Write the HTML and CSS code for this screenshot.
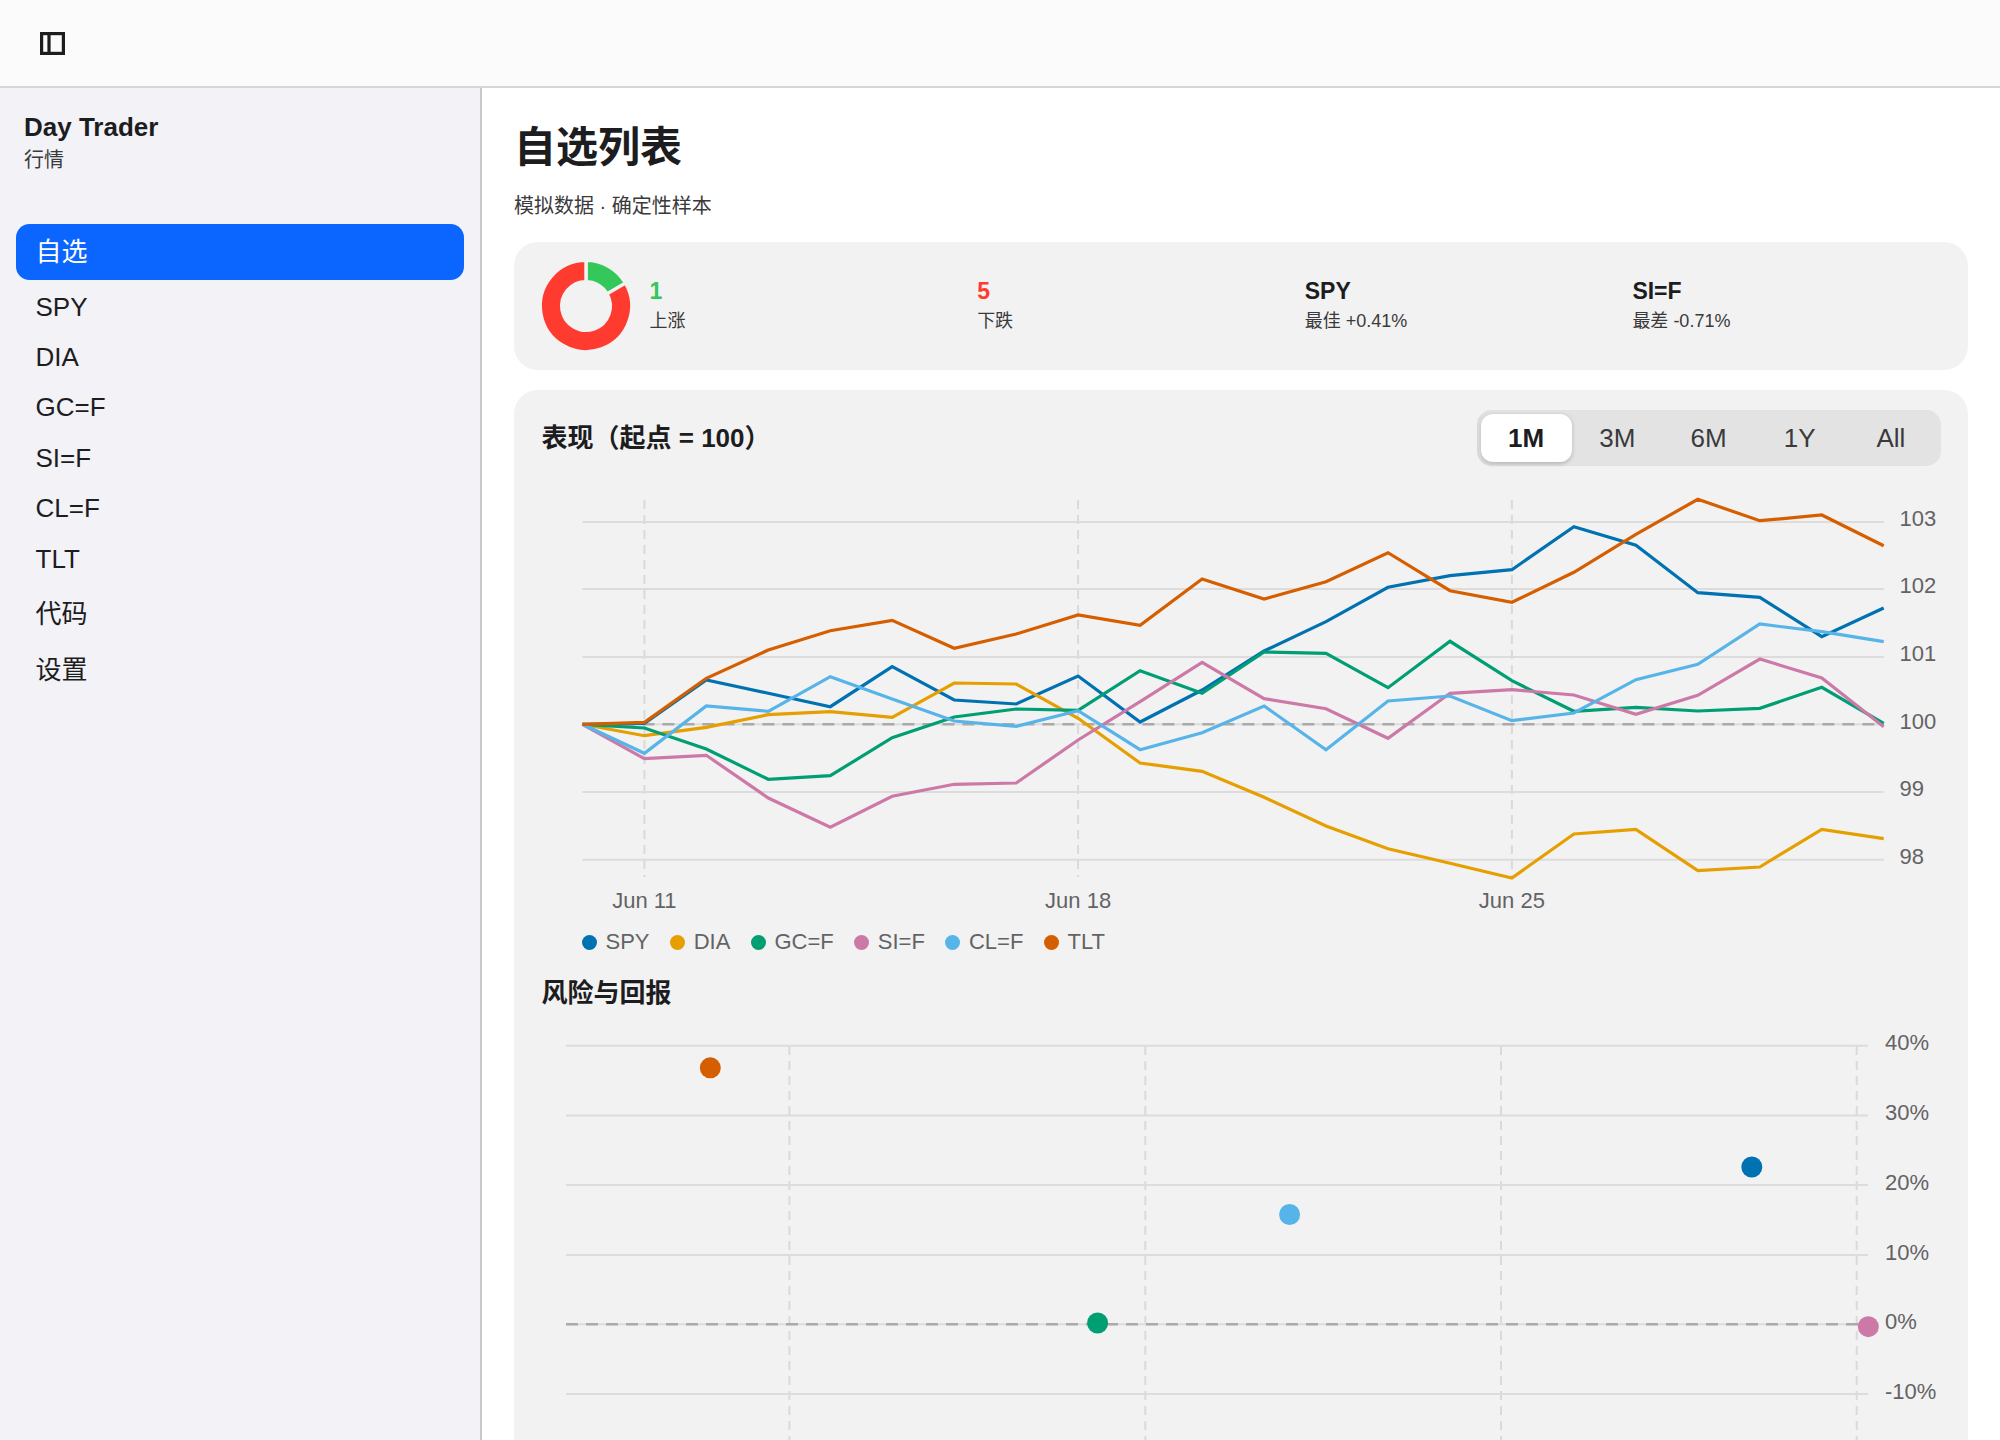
FILE: index.html
```html
<!DOCTYPE html>
<html lang="zh">
<head>
<meta charset="utf-8">
<title>自选列表</title>
<link rel="stylesheet" href="styles.css">
</head>
<body>
<header class="topbar">
  <button class="icon-btn" aria-label="Toggle sidebar">
    <svg width="25" height="23" viewBox="0 0 25 23"><rect x="1.6" y="1.6" width="21.8" height="19.8" class="ico"/><line x1="9" y1="1.6" x2="9" y2="21.4" class="ico"/></svg>
  </button>
</header>
<div class="shell">
  <aside class="sidebar">
    <div class="brand">
      <div class="brand-name">Day Trader</div>
      <div class="brand-sub">行情</div>
    </div>
    <nav class="nav">
      <a class="nav-item active">自选</a>
      <a class="nav-item">SPY</a>
      <a class="nav-item">DIA</a>
      <a class="nav-item">GC=F</a>
      <a class="nav-item">SI=F</a>
      <a class="nav-item">CL=F</a>
      <a class="nav-item">TLT</a>
      <a class="nav-item cjk">代码</a>
      <a class="nav-item cjk">设置</a>
    </nav>
  </aside>
  <main class="main">
    <h1 class="title">自选列表</h1>
    <p class="subtitle">模拟数据 · 确定性样本</p>
    <section class="card summary">
      <svg class="donut" width="88" height="88" viewBox="0 0 88 88">
        <path class="seg-up" d="M44 -1.7A45.7 45.7 0 0 1 83.58 21.15L65.04 31.85A24.3 24.3 0 0 0 44 19.7Z"/>
        <path class="seg-down" d="M83.58 21.15A45.7 45.7 0 1 1 44 -1.7L44 19.7A24.3 24.3 0 1 0 65.04 31.85Z"/>
      </svg>
      <div class="stats">
        <div class="stat"><div class="stat-value up">1</div><div class="stat-label">上涨</div></div>
        <div class="stat"><div class="stat-value down">5</div><div class="stat-label">下跌</div></div>
        <div class="stat"><div class="stat-value">SPY</div><div class="stat-label">最佳 +0.41%</div></div>
        <div class="stat"><div class="stat-value">SI=F</div><div class="stat-label">最差 -0.71%</div></div>
      </div>
    </section>
    <section class="card charts">
      <div class="chart-head">
        <h2 class="chart-title">表现（起点 = 100）</h2>
        <div class="segmented">
          <button class="seg selected">1M</button>
          <button class="seg">3M</button>
          <button class="seg">6M</button>
          <button class="seg">1Y</button>
          <button class="seg">All</button>
        </div>
      </div>
      <svg class="plot plot-line" viewBox="542 470 1398 450">
        <g class="grid-v">
          <line x1="644.4" y1="500" x2="644.4" y2="877"/>
          <line x1="1078.1" y1="500" x2="1078.1" y2="877"/>
          <line x1="1511.9" y1="500" x2="1511.9" y2="877"/>
        </g>
        <g class="grid-h">
          <line x1="582.4" y1="522" x2="1883.7" y2="522"/>
          <line x1="582.4" y1="589" x2="1883.7" y2="589"/>
          <line x1="582.4" y1="657" x2="1883.7" y2="657"/>
          <line x1="582.4" y1="724.3" x2="1883.7" y2="724.3"/>
          <line x1="582.4" y1="792" x2="1883.7" y2="792"/>
          <line x1="582.4" y1="859.7" x2="1883.7" y2="859.7"/>
        </g>
        <line class="zero" x1="582.4" y1="724.3" x2="1883.7" y2="724.3"/>
        <g class="series">
          <polyline class="c-spy" points="582.4,724.3 644.4,723.3 706.3,680 768.3,693.3 830.3,706.7 892.2,666.7 954.2,700 1016.2,704 1078.1,676 1140.1,722 1202.1,690 1264.1,651 1326,621.7 1388,587.3 1450,575.7 1511.9,569.7 1573.9,526.7 1635.9,545.3 1697.8,592.7 1759.8,597.3 1821.8,636.7 1883.7,608"/>
          <polyline class="c-dia" points="582.4,724.3 644.4,735.7 706.3,727.3 768.3,714.7 830.3,711.7 892.2,717.3 954.2,683 1016.2,684 1078.1,718.3 1140.1,763 1202.1,771.3 1264.1,797.3 1326,826 1388,848.7 1450,863.3 1511.9,878 1573.9,834 1635.9,829.3 1697.8,870.7 1759.8,867 1821.8,829.3 1883.7,838.7"/>
          <polyline class="c-gc" points="582.4,724.3 644.4,728 706.3,749 768.3,779.3 830.3,775.7 892.2,737.7 954.2,717 1016.2,709 1078.1,710.3 1140.1,670.7 1202.1,693.3 1264.1,652 1326,653.3 1388,687.7 1450,641.3 1511.9,680.7 1573.9,711.3 1635.9,707.3 1697.8,711 1759.8,708.3 1821.8,687.3 1883.7,723.3"/>
          <polyline class="c-si" points="582.4,724.3 644.4,758.7 706.3,755.3 768.3,798 830.3,827.3 892.2,796.3 954.2,784.3 1016.2,783 1078.1,740 1140.1,701.7 1202.1,662.3 1264.1,698.7 1326,708.7 1388,738.3 1450,693.3 1511.9,689.7 1573.9,695 1635.9,714.3 1697.8,695.3 1759.8,659 1821.8,678 1883.7,726.7"/>
          <polyline class="c-cl" points="582.4,724.3 644.4,753.3 706.3,706 768.3,711.3 830.3,676.7 892.2,699 954.2,721 1016.2,726.3 1078.1,710.7 1140.1,749.7 1202.1,732.7 1264.1,706 1326,749.7 1388,701 1450,696 1511.9,720.7 1573.9,713 1635.9,679.7 1697.8,664.3 1759.8,624 1821.8,631.7 1883.7,641.7"/>
          <polyline class="c-tlt" points="582.4,724.3 644.4,722.3 706.3,678.3 768.3,650 830.3,630.7 892.2,620.3 954.2,648.3 1016.2,634 1078.1,615 1140.1,625.3 1202.1,579 1264.1,599 1326,581.7 1388,552.7 1450,590.7 1511.9,602.3 1573.9,572.3 1635.9,534.3 1697.8,499.3 1759.8,520.7 1821.8,515 1883.7,545.7"/>
        </g>
        <g class="axis">
          <text x="1899.5" y="526">103</text>
          <text x="1899.5" y="593">102</text>
          <text x="1899.5" y="661">101</text>
          <text x="1899.5" y="729">100</text>
          <text x="1899.5" y="796">99</text>
          <text x="1899.5" y="864">98</text>
        </g>
        <g class="axis center">
          <text x="644.4" y="908">Jun 11</text>
          <text x="1078.1" y="908">Jun 18</text>
          <text x="1511.9" y="908">Jun 25</text>
        </g>
      </svg>
      <ul class="legend">
        <li class="legend-item"><span class="dot bg-spy"></span>SPY</li>
        <li class="legend-item"><span class="dot bg-dia"></span>DIA</li>
        <li class="legend-item"><span class="dot bg-gc"></span>GC=F</li>
        <li class="legend-item"><span class="dot bg-si"></span>SI=F</li>
        <li class="legend-item"><span class="dot bg-cl"></span>CL=F</li>
        <li class="legend-item"><span class="dot bg-tlt"></span>TLT</li>
      </ul>
      <h2 class="chart-title risk-title">风险与回报</h2>
      <svg class="plot plot-scatter" viewBox="542 1020 1398 480">
        <g class="grid-v">
          <line x1="789.4" y1="1046" x2="789.4" y2="1500"/>
          <line x1="1145.3" y1="1046" x2="1145.3" y2="1500"/>
          <line x1="1501" y1="1046" x2="1501" y2="1500"/>
          <line x1="1856.7" y1="1046" x2="1856.7" y2="1500"/>
        </g>
        <g class="grid-h">
          <line x1="566" y1="1045.7" x2="1868" y2="1045.7"/>
          <line x1="566" y1="1115.5" x2="1868" y2="1115.5"/>
          <line x1="566" y1="1185" x2="1868" y2="1185"/>
          <line x1="566" y1="1255" x2="1868" y2="1255"/>
          <line x1="566" y1="1324.3" x2="1868" y2="1324.3"/>
          <line x1="566" y1="1394" x2="1868" y2="1394"/>
        </g>
        <line class="zero" x1="566" y1="1324.3" x2="1868" y2="1324.3"/>
        <g class="points">
          <circle class="f-tlt" cx="710.3" cy="1067.8" r="10.5"/>
          <circle class="f-gc" cx="1097.6" cy="1323" r="10.5"/>
          <circle class="f-cl" cx="1289.6" cy="1214.5" r="10.5"/>
          <circle class="f-spy" cx="1751.8" cy="1167" r="10.5"/>
          <circle class="f-si" cx="1868.3" cy="1326.7" r="10.5"/>
        </g>
        <g class="axis">
          <text x="1885" y="1050">40%</text>
          <text x="1885" y="1120">30%</text>
          <text x="1885" y="1189.5">20%</text>
          <text x="1885" y="1259.5">10%</text>
          <text x="1885" y="1329">0%</text>
          <text x="1885" y="1398.5">-10%</text>
        </g>
      </svg>
    </section>
  </main>
</div>
</body>
</html>
```

FILE: styles.css
```css
* { box-sizing: border-box; }
html, body { margin: 0; height: 100%; overflow: hidden; background: #fff; color: #1d1d1f; font-family: "Liberation Sans", "Noto Sans CJK SC", sans-serif; }
body { display: flex; flex-direction: column; height: 100vh; }
.topbar { flex: 0 0 88px; background: #fbfbfb; border-bottom: 2px solid #d6d6d6; display: flex; align-items: center; padding-left: 40px; }
.icon-btn { border: 0; padding: 0; background: none; display: flex; margin-top: 1.4px; }
.ico { fill: none; stroke: #1d1d1f; stroke-width: 3.2; }
.shell { flex: 1; display: flex; min-height: 0; }
.sidebar { flex: 0 0 482px; background: #f2f2f7; border-right: 2px solid #c8c8cc; padding: 0 16px; }
.brand { padding: 24px 8px 0; height: 136px; }
.brand-name { font-size: 26px; font-weight: 700; }
.brand-sub { font-size: 20px; color: #3a3a3c; margin-top: 1px; }
.nav { display: flex; flex-direction: column; gap: 3px; }
.nav-item { font-size: 26px; line-height: 30px; padding: 8.7px 19.5px; border-radius: 13.5px; color: #1d1d1f; }
.nav-item.cjk { padding-top: 14px; padding-bottom: 9px; }
.nav-item.active { background: #0a66ff; color: #fff; padding-top: 13px; padding-bottom: 13px; }
.main { flex: 1; min-width: 0; padding: 0 32px; overflow: hidden; }
.title { font-size: 42px; font-weight: 700; margin: 29px 0 0; line-height: 61px; }
.subtitle { font-size: 20px; margin: 14px 0 0; color: #3a3a3c; line-height: 28px; }
.card { background: #f2f2f2; border-radius: 24px; }
.summary { display: flex; align-items: center; gap: 20px; padding: 20px 27.5px; margin-top: 22px; }
.donut { flex: none; overflow: visible; }
.seg-up, .seg-down { stroke: #f2f2f2; stroke-width: 3.4; }
.seg-up { fill: #34c759; }
.seg-down { fill: #ff3b30; }
.stats { flex: 1; display: grid; grid-template-columns: repeat(4, 1fr); column-gap: 19.5px; padding-bottom: 1.5px; }
.stat-value { font-size: 23px; font-weight: 700; line-height: 28px; }
.stat-value.up { color: #34c759; }
.stat-value.down { color: #ff3b30; }
.stat-label { font-size: 18px; line-height: 26px; margin-top: 3px; color: #3a3a3c; }
.charts { margin-top: 20px; padding: 20px 27.5px 40px; }
.chart-head { display: flex; justify-content: space-between; align-items: center; }
.chart-title { font-size: 26px; font-weight: 700; margin: 0; line-height: 37px; }
.segmented { display: grid; grid-template-columns: repeat(5, 1fr); width: 464px; height: 56px; padding: 4px; background: #e3e3e3; border-radius: 15px; box-shadow: inset 1.5px 0 1.5px rgba(0, 0, 0, .04); }
.seg { border: 0; background: none; font: inherit; font-size: 26px; color: #3a3a3c; border-radius: 12px; padding: 0; }
.seg.selected { background: #fff; color: #1d1d1f; font-weight: 700; box-shadow: 0 1.5px 4.5px rgba(0, 0, 0, .2); }
.plot { display: block; width: 1398px; }
.plot-line { height: 450px; margin-top: 4px; }
.plot-scatter { height: 480px; margin-top: 8px; }
.grid-v line { stroke: #dadada; stroke-width: 2; stroke-dasharray: 9 6; }
.grid-h line { stroke: #dcdcdc; stroke-width: 2; }
.zero { stroke: #aaaaaa; stroke-width: 2.6; stroke-dasharray: 12 8; }
.series polyline { fill: none; stroke-width: 3.2; stroke-linejoin: miter; }
.c-spy { stroke: #0072b2; }
.c-dia { stroke: #e69f00; }
.c-gc { stroke: #009e73; }
.c-si { stroke: #cc79a7; }
.c-cl { stroke: #56b4e9; }
.c-tlt { stroke: #d55e00; }
.f-spy, .bg-spy { fill: #0072b2; background: #0072b2; }
.f-dia, .bg-dia { fill: #e69f00; background: #e69f00; }
.f-gc, .bg-gc { fill: #009e73; background: #009e73; }
.f-si, .bg-si { fill: #cc79a7; background: #cc79a7; }
.f-cl, .bg-cl { fill: #56b4e9; background: #56b4e9; }
.f-tlt, .bg-tlt { fill: #d55e00; background: #d55e00; }
.axis text { font-size: 22px; fill: #636366; }
.axis.center text { text-anchor: middle; }
.legend { list-style: none; display: flex; gap: 20.6px; margin: 10px 0 0; padding: 0 0 0 40.5px; }
.legend-item { display: flex; align-items: center; gap: 8.5px; font-size: 22px; line-height: 24px; color: #636366; }
.dot { width: 15px; height: 15px; border-radius: 50%; }
.risk-title { margin-top: 21px; }
```
